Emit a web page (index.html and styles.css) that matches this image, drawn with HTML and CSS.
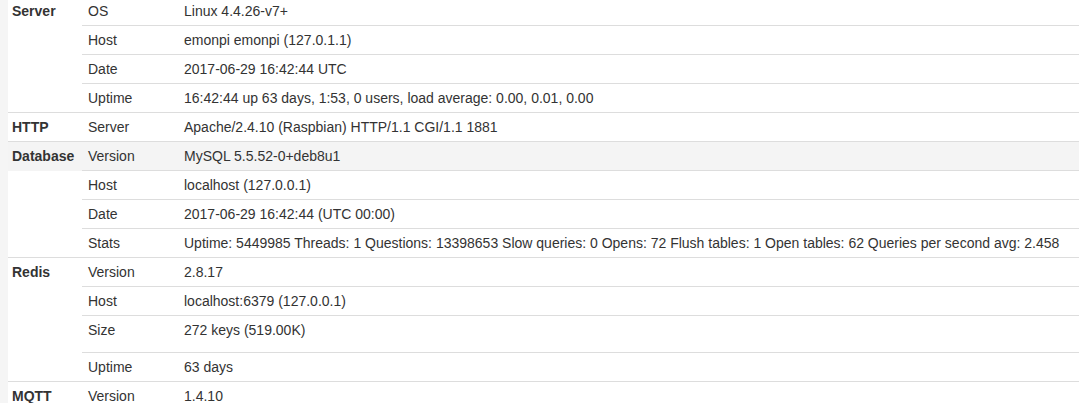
FILE: index.html
```html
<!DOCTYPE html>
<html>
<head>
<meta charset="utf-8">
<link rel="stylesheet" href="styles.css">
</head>
<body>
<div class="page">
  <table class="info">
    <tbody>
      <tr class="group-start first">
        <th class="group">Server</th><td class="key">OS</td><td class="val">Linux 4.4.26-v7+</td>
      </tr>
      <tr><th class="group"></th><td class="key">Host</td><td class="val">emonpi emonpi (127.0.1.1)</td></tr>
      <tr><th class="group"></th><td class="key">Date</td><td class="val">2017-06-29 16:42:44 UTC</td></tr>
      <tr><th class="group"></th><td class="key">Uptime</td><td class="val">16:42:44 up 63 days, 1:53, 0 users, load average: 0.00, 0.01, 0.00</td></tr>

      <tr class="group-start">
        <th class="group">HTTP</th><td class="key">Server</td><td class="val">Apache/2.4.10 (Raspbian) HTTP/1.1 CGI/1.1 1881</td>
      </tr>

      <tr class="group-start shaded">
        <th class="group">Database</th><td class="key">Version</td><td class="val">MySQL 5.5.52-0+deb8u1</td>
      </tr>
      <tr><th class="group"></th><td class="key">Host</td><td class="val">localhost (127.0.0.1)</td></tr>
      <tr><th class="group"></th><td class="key">Date</td><td class="val">2017-06-29 16:42:44 (UTC 00:00)</td></tr>
      <tr><th class="group"></th><td class="key">Stats</td><td class="val">Uptime: 5449985 Threads: 1 Questions: 13398653 Slow queries: 0 Opens: 72 Flush tables: 1 Open tables: 62 Queries per second avg: 2.458</td></tr>

      <tr class="group-start">
        <th class="group">Redis</th><td class="key">Version</td><td class="val">2.8.17</td>
      </tr>
      <tr><th class="group"></th><td class="key">Host</td><td class="val">localhost:6379 (127.0.0.1)</td></tr>
      <tr class="tall"><th class="group"></th><td class="key">Size</td><td class="val">272 keys (519.00K)</td></tr>
      <tr><th class="group"></th><td class="key">Uptime</td><td class="val">63 days</td></tr>

      <tr class="group-start">
        <th class="group">MQTT</th><td class="key">Version</td><td class="val">1.4.10</td>
      </tr>
    </tbody>
  </table>
</div>
</body>
</html>
```
FILE: styles.css
```css
html, body {
  margin: 0;
  padding: 0;
  background: #f5f5f5;
  overflow: hidden;
}

.page {
  margin-left: 8px;
  background: #fff;
  min-height: 403px;
}

.info {
  border-collapse: collapse;
  width: 100%;
  margin-top: -4px;
  font-family: "Liberation Sans", Arial, sans-serif;
  font-size: 14px;
  line-height: 20px;
  color: #333;
}

.info th,
.info td {
  padding: 4px 5px;
  text-align: left;
  vertical-align: top;
  border-top: 1px solid #ddd;
  white-space: nowrap;
}

.info .group {
  width: 65px;
  font-weight: bold;
  padding-left: 4px;
  border-top: none;
}

.info .group-start .group {
  border-top: 1px solid #ddd;
}

.info .key {
  width: 86px;
  padding-left: 6px;
}

.info .val {
  padding-left: 5px;
}

.info .shaded th,
.info .shaded td {
  background: #f4f4f4;
}

.info .tall td {
  padding-bottom: 12px;
}
```
